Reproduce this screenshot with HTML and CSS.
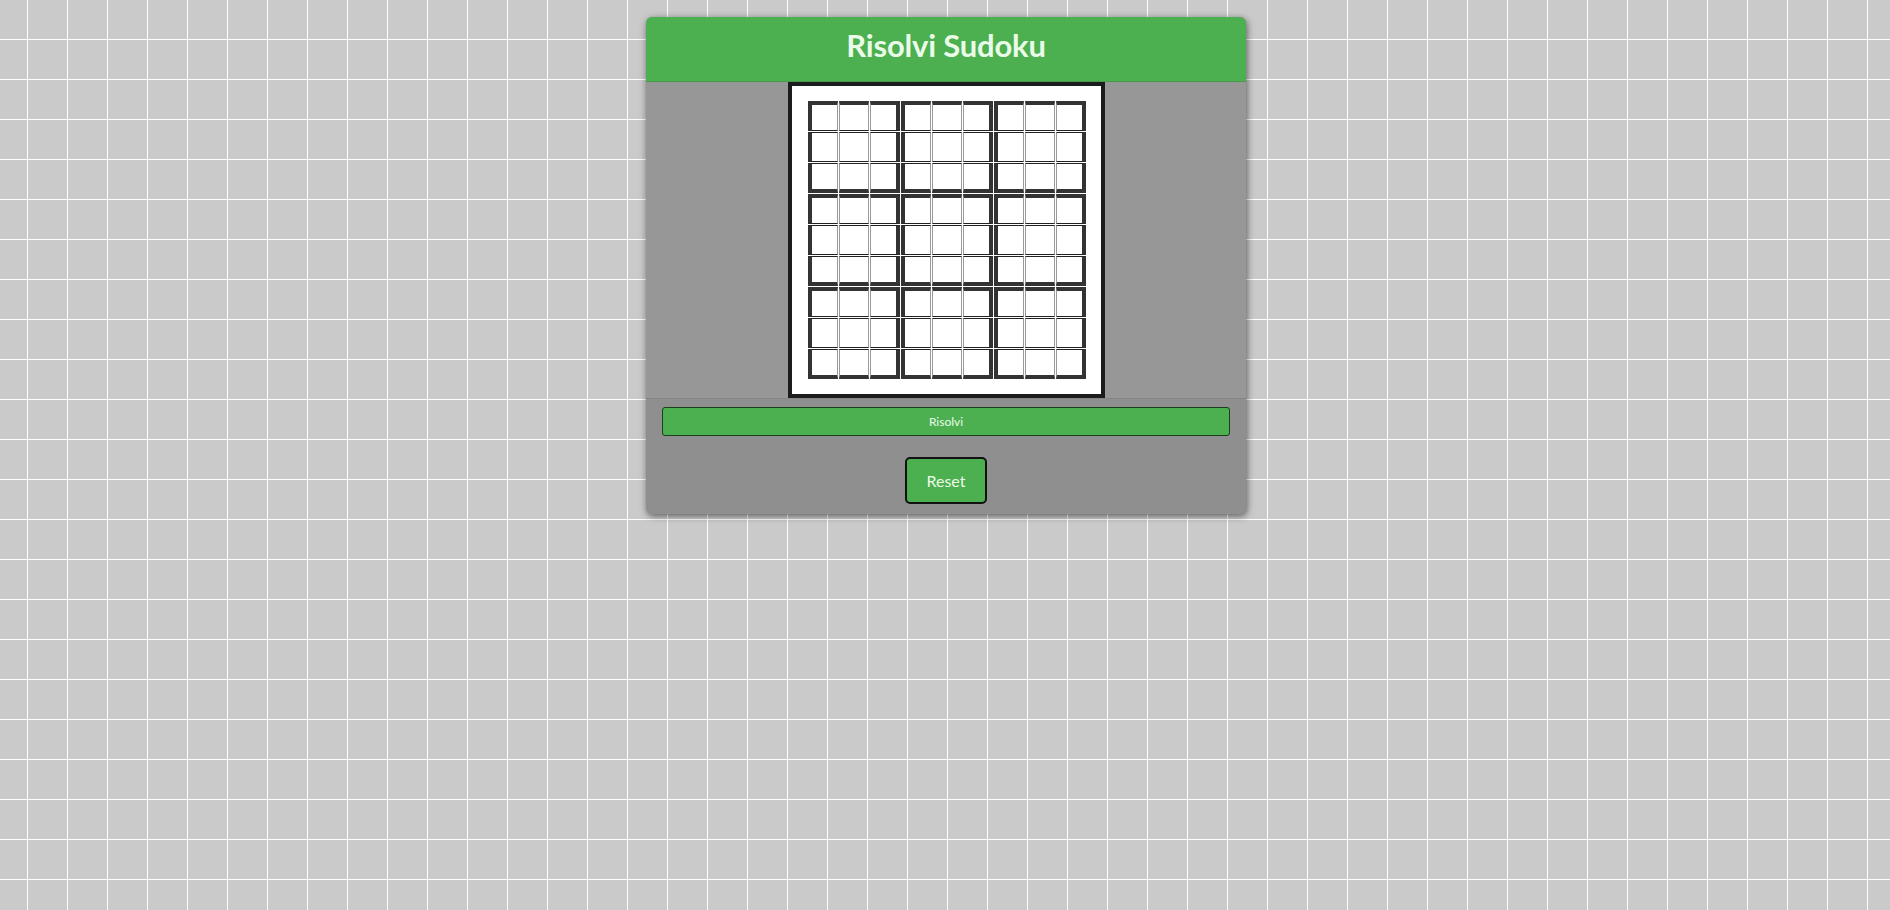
FILE: index.html
```html
<!DOCTYPE html>
<html lang="it">
<head>
<meta charset="utf-8">
<title>Risolvi Sudoku</title>
<link rel="stylesheet" href="styles.css">
</head>
<body>
<main class="card">
  <header class="card-header">
    <h1 class="title">Risolvi Sudoku</h1>
  </header>
  <section class="board-area">
    <div class="board">
      <div class="grid">
        <div class="row"><input class="cell" maxlength="1"><input class="cell" maxlength="1"><input class="cell" maxlength="1"><input class="cell" maxlength="1"><input class="cell" maxlength="1"><input class="cell" maxlength="1"><input class="cell" maxlength="1"><input class="cell" maxlength="1"><input class="cell" maxlength="1"></div>
        <div class="row"><input class="cell" maxlength="1"><input class="cell" maxlength="1"><input class="cell" maxlength="1"><input class="cell" maxlength="1"><input class="cell" maxlength="1"><input class="cell" maxlength="1"><input class="cell" maxlength="1"><input class="cell" maxlength="1"><input class="cell" maxlength="1"></div>
        <div class="row"><input class="cell" maxlength="1"><input class="cell" maxlength="1"><input class="cell" maxlength="1"><input class="cell" maxlength="1"><input class="cell" maxlength="1"><input class="cell" maxlength="1"><input class="cell" maxlength="1"><input class="cell" maxlength="1"><input class="cell" maxlength="1"></div>
        <div class="row"><input class="cell" maxlength="1"><input class="cell" maxlength="1"><input class="cell" maxlength="1"><input class="cell" maxlength="1"><input class="cell" maxlength="1"><input class="cell" maxlength="1"><input class="cell" maxlength="1"><input class="cell" maxlength="1"><input class="cell" maxlength="1"></div>
        <div class="row"><input class="cell" maxlength="1"><input class="cell" maxlength="1"><input class="cell" maxlength="1"><input class="cell" maxlength="1"><input class="cell" maxlength="1"><input class="cell" maxlength="1"><input class="cell" maxlength="1"><input class="cell" maxlength="1"><input class="cell" maxlength="1"></div>
        <div class="row"><input class="cell" maxlength="1"><input class="cell" maxlength="1"><input class="cell" maxlength="1"><input class="cell" maxlength="1"><input class="cell" maxlength="1"><input class="cell" maxlength="1"><input class="cell" maxlength="1"><input class="cell" maxlength="1"><input class="cell" maxlength="1"></div>
        <div class="row"><input class="cell" maxlength="1"><input class="cell" maxlength="1"><input class="cell" maxlength="1"><input class="cell" maxlength="1"><input class="cell" maxlength="1"><input class="cell" maxlength="1"><input class="cell" maxlength="1"><input class="cell" maxlength="1"><input class="cell" maxlength="1"></div>
        <div class="row"><input class="cell" maxlength="1"><input class="cell" maxlength="1"><input class="cell" maxlength="1"><input class="cell" maxlength="1"><input class="cell" maxlength="1"><input class="cell" maxlength="1"><input class="cell" maxlength="1"><input class="cell" maxlength="1"><input class="cell" maxlength="1"></div>
        <div class="row"><input class="cell" maxlength="1"><input class="cell" maxlength="1"><input class="cell" maxlength="1"><input class="cell" maxlength="1"><input class="cell" maxlength="1"><input class="cell" maxlength="1"><input class="cell" maxlength="1"><input class="cell" maxlength="1"><input class="cell" maxlength="1"></div>
      </div>
    </div>
  </section>
  <footer class="actions">
    <button class="btn-solve" type="button">Risolvi</button>
    <button class="btn-reset" type="button">Reset</button>
  </footer>
</main>
</body>
</html>
```

FILE: styles.css
```css
html, body {
  margin: 0;
  padding: 0;
}

body {
  min-height: 910px;
  padding-top: 17px;
  padding-left: 2px;
  box-sizing: border-box;
  font-family: Lato, "Open Sans", sans-serif;
  background-color: #cacaca;
  background-image:
    linear-gradient(to right, #ffffff 1px, transparent 1px),
    linear-gradient(to bottom, #ffffff 1px, transparent 1px);
  background-size: 40px 40px;
  background-position: 27px 39px;
}

.card {
  width: 600px;
  margin: 0 auto;
  border-radius: 6px;
  overflow: hidden;
  background: #8f8f8f;
  box-shadow: 1px 2px 7px rgba(0, 0, 0, 0.55);
  display: flex;
  flex-direction: column;
}

.card-header {
  height: 65px;
  box-sizing: border-box;
  padding-bottom: 8px;
  background: #4caf50;
  border-bottom: 1px solid #469a49;
  display: flex;
  align-items: center;
  justify-content: center;
}

.title {
  margin: 0;
  font-size: 31px;
  font-weight: 700;
  color: #eafbe8;
  letter-spacing: -0.2px;
}

.board-area {
  background: #979797;
  display: flex;
  justify-content: center;
  border-bottom: 1px solid #858585;
}

.board {
  background: #ffffff;
  border: 4px solid #1c1c1c;
  padding: 15px 15px 15px 16px;
}

.grid {
  display: flex;
  flex-direction: column;
  gap: 1px;
  background: #ffffff;
}

.row {
  display: flex;
  gap: 1px;
}

.cell {
  -webkit-appearance: none;
  appearance: none;
  width: 30px;
  height: 30px;
  margin: 0;
  padding: 0;
  box-sizing: border-box;
  background: #ffffff;
  border-style: solid;
  border-width: 1px;
  border-color: #222222 #9a9a9a #222222 #9a9a9a;
  border-radius: 0;
  font-family: Lato, sans-serif;
  font-size: 16px;
  text-align: center;
  outline: none;
}

.cell:nth-child(3n+1) {
  border-left: 4px solid #333333;
}

.cell:nth-child(3n) {
  border-right: 4px solid #333333;
}

.row:nth-child(3n+1) .cell {
  border-top: 4px solid #333333;
}

.row:nth-child(3n) .cell {
  border-bottom: 4px solid #333333;
}

.actions {
  display: flex;
  flex-direction: column;
  align-items: center;
  padding: 8px 16px 10px;
  gap: 21px;
}

.btn-solve {
  width: 100%;
  height: 29px;
  margin: 0;
  padding: 0;
  background: #4caf50;
  border: 1px solid #1d3d1f;
  border-radius: 3px;
  color: #eafbe8;
  font-family: Lato, sans-serif;
  font-size: 12px;
  cursor: pointer;
}

.btn-reset {
  height: 47px;
  margin: 0;
  padding: 0 19px;
  background: #4caf50;
  border: 2px solid #111111;
  border-radius: 5px;
  color: #eafbe8;
  font-family: Lato, sans-serif;
  font-size: 16px;
  cursor: pointer;
}
```
